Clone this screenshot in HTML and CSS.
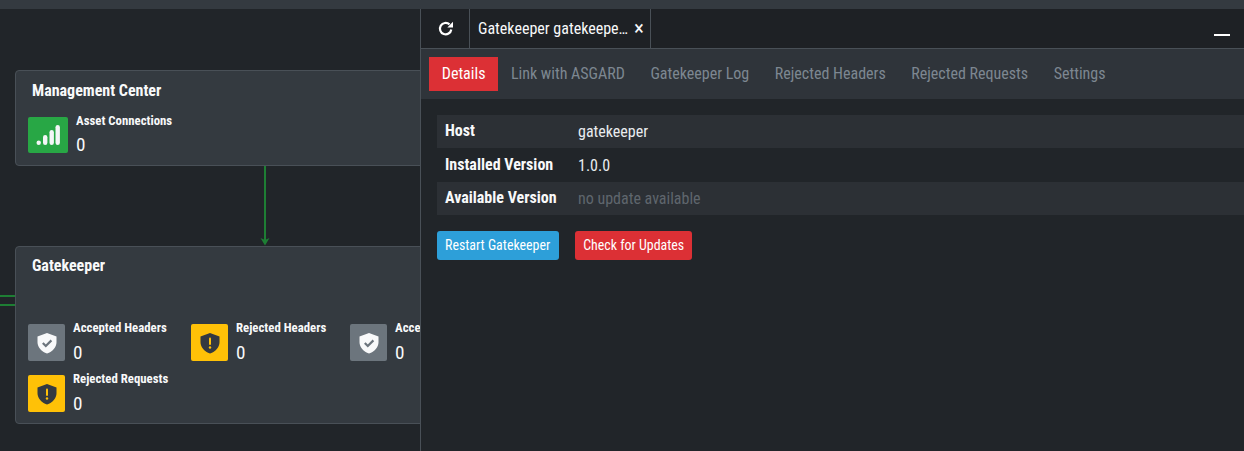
FILE: index.html
```html
<!DOCTYPE html>
<html lang="en">
<head>
<meta charset="utf-8">
<title>Gatekeeper</title>
<link rel="stylesheet" href="styles.css">
</head>
<body>
<div class="topbar"></div>
<main class="canvas">
  <svg class="wires" width="420" height="442" viewBox="0 0 420 442">
    <path d="M265 156V232" stroke="#1e7e34" stroke-width="2" fill="none"/>
    <path d="M260.500 229l4.500 7.500 4.500-7.500-4.500 2z" fill="#1e7e34"/>
    <path d="M0 287H15M0 296H15" stroke="#1e7e34" stroke-width="2" fill="none"/>
  </svg>
  <section class="node node-mc">
    <h2 class="node-title">Management Center</h2>
    <div class="stat stat-mc">
      <span class="stat-icon green big">
        <svg width="24" height="24" viewBox="0 0 24 24"><g fill="#f4f6f7"><rect x=".5" y="17.500" width="4.400" height="4.500" rx="2.200"/><rect x="7" y="12" width="4.400" height="10" rx="2.200"/><rect x="13.500" y="7" width="4.400" height="15" rx="2.200"/><rect x="19.500" y="2" width="4.400" height="20" rx="2.200"/></g></svg>
      </span>
      <div class="stat-text"><div class="stat-label">Asset Connections</div><div class="stat-value">0</div></div>
    </div>
  </section>
  <section class="node node-gk">
    <h2 class="node-title">Gatekeeper</h2>
    <div class="stats">
      <div class="stat w1">
        <span class="stat-icon grey"><svg width="20" height="22" viewBox="0 0 20 22"><path d="M10 1L19.500 4.500V10C19.500 15.500 15.500 19.500 10 21.500C4.500 19.500.5 15.500.5 10V4.500Z" fill="#f8f9fa"/><path d="M5.800 11l3 3 5.600-5.600" stroke="#6c757d" stroke-width="2.200" fill="none"/></svg></span>
        <div class="stat-text"><div class="stat-label">Accepted Headers</div><div class="stat-value">0</div></div>
      </div>
      <div class="stat w2">
        <span class="stat-icon yellow"><svg width="20" height="22" viewBox="0 0 20 22"><path d="M10 1L19.500 4.500V10C19.500 15.500 15.500 19.500 10 21.500C4.500 19.500.5 15.500.5 10V4.500Z" fill="#343a40"/><rect x="9" y="5.500" width="2" height="7.500" rx="1" fill="#ffc107"/><circle cx="10" cy="15.500" r="1.200" fill="#ffc107"/></svg></span>
        <div class="stat-text"><div class="stat-label">Rejected Headers</div><div class="stat-value">0</div></div>
      </div>
      <div class="stat w3">
        <span class="stat-icon grey"><svg width="20" height="22" viewBox="0 0 20 22"><path d="M10 1L19.500 4.500V10C19.500 15.500 15.500 19.500 10 21.500C4.500 19.500.5 15.500.5 10V4.500Z" fill="#f8f9fa"/><path d="M5.800 11l3 3 5.600-5.600" stroke="#6c757d" stroke-width="2.200" fill="none"/></svg></span>
        <div class="stat-text"><div class="stat-label">Accepted Requests</div><div class="stat-value">0</div></div>
      </div>
      <div class="stat w1">
        <span class="stat-icon yellow"><svg width="20" height="22" viewBox="0 0 20 22"><path d="M10 1L19.500 4.500V10C19.500 15.500 15.500 19.500 10 21.500C4.500 19.500.5 15.500.5 10V4.500Z" fill="#343a40"/><rect x="9" y="5.500" width="2" height="7.500" rx="1" fill="#ffc107"/><circle cx="10" cy="15.500" r="1.200" fill="#ffc107"/></svg></span>
        <div class="stat-text"><div class="stat-label">Rejected Requests</div><div class="stat-value">0</div></div>
      </div>
    </div>
  </section>
</main>
<aside class="panel">
  <div class="tabbar">
    <button class="refresh" aria-label="Refresh"><svg width="16" height="16" viewBox="0 0 16 16"><path d="M13.300 8.500A5.700 5.700 0 1 1 11.500 3.400" fill="none" stroke="#fff" stroke-width="2.200"/><path d="M15 .8V6.500H9.300Z" fill="#fff"/></svg></button>
    <div class="tab"><span class="tab-name">Gatekeeper gatekeepe…</span><span class="tab-close">×</span></div>
    <span class="minimize"></span>
  </div>
  <nav class="subnav">
    <a class="subnav-item active">Details</a>
    <a class="subnav-item">Link with ASGARD</a>
    <a class="subnav-item">Gatekeeper Log</a>
    <a class="subnav-item">Rejected Headers</a>
    <a class="subnav-item">Rejected Requests</a>
    <a class="subnav-item">Settings</a>
  </nav>
  <div class="content">
    <div class="row odd"><div class="key">Host</div><div class="val">gatekeeper</div></div>
    <div class="row even"><div class="key">Installed Version</div><div class="val">1.0.0</div></div>
    <div class="row odd"><div class="key">Available Version</div><div class="val muted">no update available</div></div>
    <div class="actions">
      <button class="btn blue">Restart Gatekeeper</button>
      <button class="btn red">Check for Updates</button>
    </div>
  </div>
</aside>
</body>
</html>
```
FILE: styles.css
```css
* { box-sizing: border-box; }
html, body { margin: 0; height: 100%; }
body {
  width: 1244px;
  height: 451px;
  overflow: hidden;
  position: relative;
  background: #212529;
  color: #f8f9fa;
  font-family: "Roboto Condensed", Roboto, "Liberation Sans", sans-serif;
  font-stretch: 75%;
}
.topbar { height: 9px; background: #343a40; }
.canvas { position: relative; height: 442px; }
.wires { position: absolute; left: 0; top: 0; }
.node {
  position: absolute;
  left: 15px;
  width: 500px;
  background: #343a40;
  border: 1px solid #495057;
  border-radius: 4px;
  padding: 10px 12px;
}
.node-mc { top: 61px; height: 96px; }
.node-gk { top: 237px; height: 178px; padding-top: 9px; }
.node-gk .stat-value { margin-top: 7px; }
.node-title { margin: 0 0 0 4px; font-size: 16px; line-height: 19px; font-weight: 700; }
.stats { display: flex; flex-wrap: wrap; margin-top: 49px; row-gap: 14px; }
.stat { display: flex; gap: 8px; height: 37px; flex: none; }
.stat-mc { margin-top: 17px; height: 36px; }
.w1 { width: 163px; }
.w2 { width: 159px; }
.w3 { width: 152px; }
.stat-icon { width: 37px; height: 37px; border-radius: 2px; display: flex; align-items: center; justify-content: center; flex: none; }
.stat-icon.big { width: 40px; height: 36px; }
.stat-icon.green { background: #28a745; }
.stat-icon.grey { background: #6c757d; }
.stat-icon.yellow { background: #ffc107; }
.stat-text { margin-top: -4px; white-space: nowrap; }
.stat-label { font-size: 12.800px; line-height: 15px; font-weight: 700; }
.stat-value { font-size: 19.200px; line-height: 21px; margin-top: 6px; font-weight: 400; }
.panel {
  position: absolute;
  left: 420px;
  top: 9px;
  width: 824px;
  height: 442px;
  background: #212529;
  border-left: 1px solid #495057;
}
.tabbar { height: 40px; display: flex; background: #1e2125; border-bottom: 1px solid #495057; position: relative; }
.refresh { width: 49px; background: none; border: 0; border-right: 1px solid #495057; padding: 0 0 0 1px; display: flex; align-items: center; justify-content: center; }
.tab { width: 181px; display: flex; align-items: center; padding: 0 5px 0 8px; border-right: 1px solid #495057; font-size: 16px; }
.tab-name { width: 150px; flex: none; white-space: nowrap; }
.tab-close { font-size: 21px; line-height: 18px; margin: 0 0 2px 6px; font-weight: 400; }
.minimize { position: absolute; right: 14px; top: 25px; width: 16px; height: 2px; background: #fff; }
.subnav { height: 50px; background: #2f343a; display: flex; align-items: center; padding: 0 8px; }
.subnav-item { font-size: 16px; line-height: 34px; padding: 0 12.750px; color: #7d8791; white-space: nowrap; }
.subnav-item.active { background: #dc3035; color: #fff; }
.content { padding: 16px 0 0 16px; }
.row { display: flex; height: 33px; align-items: center; font-size: 16px; }
.row.even { height: 34px; }
.row.odd { background: #2c3035; }
.key { width: 141px; padding: 0 0 2px 8px; font-weight: 700; flex: none; }
.val { color: #e9ecef; }
.muted { color: #5f666d; }
.actions { display: flex; gap: 16px; margin-top: 16px; }
.btn { height: 29px; border: 0; border-radius: 3px; padding: 0 8px 1px; color: #fff; font: inherit; font-stretch: 75%; font-size: 13.920px; }
.btn.blue { background: #2d9fd9; padding-right: 9px; }
.btn.red { background: #dc3035; }
```
